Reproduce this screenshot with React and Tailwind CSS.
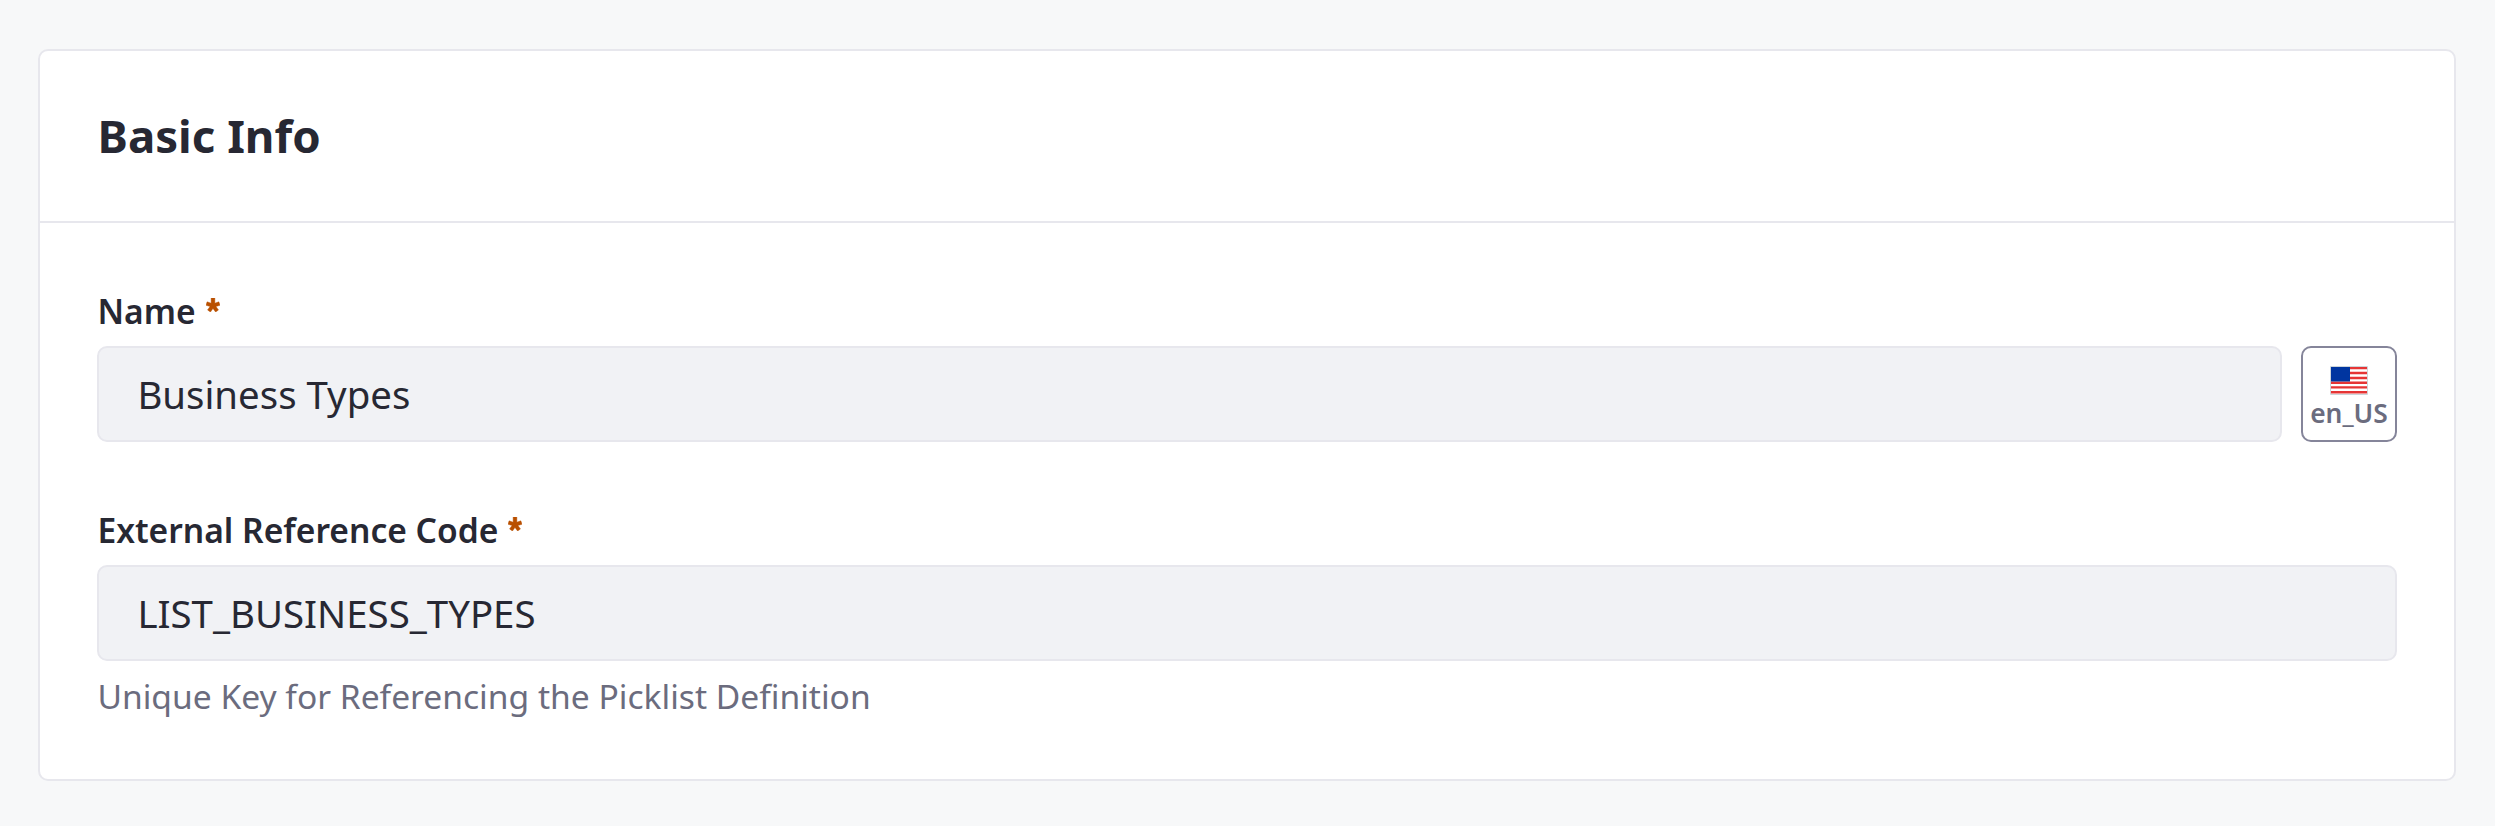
function Asterisk() {
  return (
    <svg className="mb-3 ml-2.5 size-3.5" viewBox="0 0 512 512" fill="#b95000" stroke="#b95000" strokeWidth="16" role="presentation">
      <path d="M323.6 190l146.7-48.8L512 263.9l-149.2 47.6 93.6 125.2-104.9 76.3-96.1-126.4-93.6 126.4L56.9 435.3l92.3-123.9L0 263.8l40.4-122.6L188.4 190V0h135.3z" />
    </svg>
  );
}

function Label({ children }) {
  return (
    <div className="flex h-[50px] items-center pl-[0.4px] text-[33.6px] font-semibold leading-[50px]">
      <span>{children}</span>
      <Asterisk />
    </div>
  );
}

function Field({ children }) {
  return (
    <div className="flex h-24 flex-1 items-center rounded-[10px] border-2 border-[#e7e7ed] bg-[#f1f2f5] px-[38.4px] pt-0.5 text-[38.4px]">
      {children}
    </div>
  );
}

function Flag() {
  return (
    <svg className="h-[29px] w-[38px] shrink-0" viewBox="0 0 38 29">
      <path fill="#fff" d="M0 0h38v29H0z" />
      <path stroke="#e63535" strokeWidth="2.4" d="M1 2h36M1 7h36M1 12h36M1 16.8h36M1 21.4h36M1 26.2h36" />
      <path fill="#0035a0" d="M1 1h19v14.5H1z" />
      <path fill="none" stroke="#cdd5da" d="M.5.5h37v28H.5z" />
    </svg>
  );
}

export default function App() {
  return (
    <main className="h-[826px] bg-[#f7f8f9] pl-[38px] pr-[39px] pt-[49px] font-['Noto_Sans',sans-serif] text-[#272833]">
      <section className="h-[732px] rounded-[10px] border-2 border-[#e7e7ed] bg-white">
        <header className="flex h-[172px] items-center border-b-2 border-[#e7e7ed] px-[57.6px] pb-0.5">
          <h2 className="text-[45.6px] font-bold">Basic Info</h2>
        </header>
        <div className="px-[57px] pt-[63px]">
          <Label>Name</Label>
          <div className="mt-[10px] flex gap-[19px]">
            <Field>Business Types</Field>
            <button className="flex h-24 w-24 flex-col items-center rounded-[10px] border-2 border-[#85859a] pt-[18px] text-[26.4px] font-semibold leading-[36px] text-[#6b6c7e]">
              <Flag />
              <span>en_US</span>
            </button>
          </div>
          <div className="mt-[63px]">
            <Label>External Reference Code</Label>
          </div>
          <div className="mt-[10px] flex">
            <Field>LIST_BUSINESS_TYPES</Field>
          </div>
          <p className="mt-[10px] pl-[0.4px] text-[33.6px] leading-[50px] text-[#6b6c7e]">Unique Key for Referencing the Picklist Definition</p>
        </div>
      </section>
    </main>
  );
}
